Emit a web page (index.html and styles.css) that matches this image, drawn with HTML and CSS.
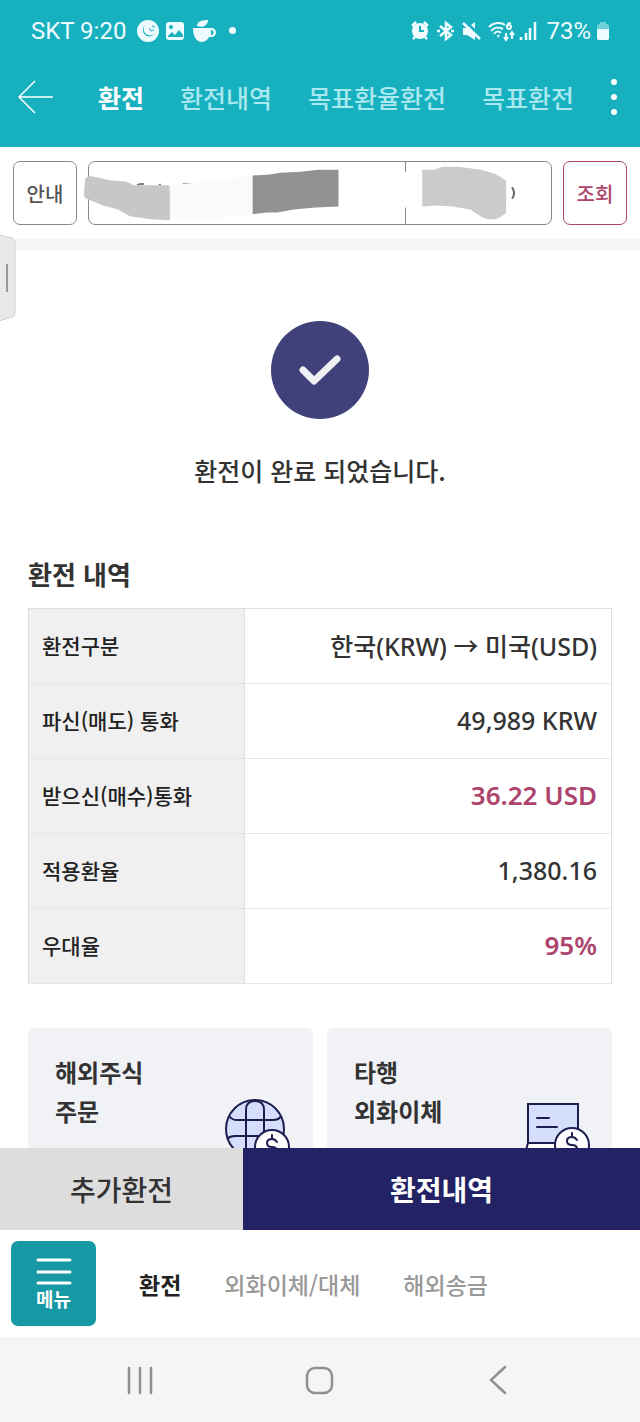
FILE: index.html
```html
<!DOCTYPE html>
<html lang="ko">
<head>
    <meta charset="UTF-8">
    <meta name="viewport" content="width=device-width, initial-scale=1.0">
    <title>환전</title>
    <link rel="stylesheet" href="styles.css">
</head>
<body>

    <header class="header">
        <div class="status">
            <span>SKT 9:20</span>
            <svg class="status-left" width="90" height="24" viewBox="0 0 90 24">
                <circle cx="12" cy="12" r="11" fill="#effcff"/>
                <path d="M9 6a6.500 6.500 0 1 0 10 8a6 6 0 0 1-10-8z" fill="#16b0bf"/>
                <path d="M13 9l2 3 3-1M16 7l3 1" stroke="#16b0bf" fill="none"/>
                <rect x="30" y="3" width="18" height="18" rx="3" fill="#effcff"/>
                <path d="M32 17l4-4 3 3 4-5 4 5v2H32z" fill="#16b0bf"/>
                <circle cx="35" cy="8" r="2" fill="#16b0bf"/>
                <path d="M57 9h18.500a4.500 4.500 0 0 1 0 9H73a9 9 0 0 1-7 5c-5 0-9-5-9-14zm18 2v5a2.500 2.500 0 0 0 0-5z" fill="#effcff" fill-rule="evenodd"/>
                <path d="M61 7c0-4 4-6 11-6 0 4-3 6-6 7z" fill="#effcff"/>
            </svg>
            <i class="status-dot"></i>
            <svg class="status-right" width="128" height="24" viewBox="0 0 128 24" fill="none" stroke="#effcff">
                <path d="M2 7l4-4M18 7l-4-4M5 18l-2 2M15 18l2 2" stroke-width="2.500"/>
                <circle cx="10" cy="12" r="8" fill="#effcff" stroke="none"/>
                <path d="M10 7v5h4" stroke="#16b0bf" stroke-width="2"/>
                <path d="M30 7l11 9-5 4V4l5 4-11 9" stroke-width="2.500"/>
                <path d="M27 12h3M41 12h3" stroke-width="2.500"/>
                <path d="M53 9h4l8-6v18l-8-5h-4z" fill="#effcff" stroke="none"/>
                <path d="M55 2l17 17" stroke="#16b0bf" stroke-width="3"/>
                <path d="M53 4l17 16" stroke-width="2.500"/>
                <path d="M79 8c5-5 12-5 16-2M81 12c3-4 8-4 12-2M84 15c2-3 5-3 7-1" stroke-width="2"/>
                <path d="M87 16l3 0-2 3z" fill="#effcff" stroke="none"/>
                <path d="M101 4c-3 0-4 2-4 4" stroke-width="2"/>
                <circle cx="99" cy="8" r="2" stroke-width="2"/>
                <path d="M96 14v7M94 18l2 3 2-3M102 20v-7M100 16l2-3 2 3" stroke-width="2"/>
                <path d="M111 18v3M116 14v7M120 9v12M125 3v18" stroke-width="2.500"/>
            </svg>
            <span>73%</span>
            <svg class="battery" width="12" height="20" viewBox="0 0 12 20">
                <path d="M3 1h6v2h1a2 2 0 0 1 2 2v12a2 2 0 0 1-2 2H2a2 2 0 0 1-2-2V5a2 2 0 0 1 2-2h1z" fill="#6fd0da"/>
                <path d="M0 8h12v9a2 2 0 0 1-2 2H2a2 2 0 0 1-2-2z" fill="#effcff"/>
            </svg>
        </div>
        <nav class="tabs">
            <button class="icon-btn back" aria-label="뒤로">
                <svg width="36" height="34" viewBox="0 0 36 34" fill="none" stroke="#fff" stroke-width="1.500">
                    <path d="M18 1L2 17l16 16M2 17h34"/>
                </svg>
            </button>
            <div class="tab-list">
                <a class="tab active" href="#">환전</a>
                <a class="tab" href="#">환전내역</a>
                <a class="tab" href="#">목표환율환전</a>
                <a class="tab" href="#">목표환전</a>
            </div>
            <button class="icon-btn" aria-label="더보기">
                <svg width="8" height="38" viewBox="0 0 8 38" fill="#fff">
                    <circle cx="4" cy="4" r="3"/>
                    <circle cx="4" cy="19" r="3"/>
                    <circle cx="4" cy="34" r="3"/>
                </svg>
            </button>
        </nav>
    </header>

    <main class="content">
        <section class="account">
            <button class="btn-box">안내</button>
            <button class="account-box" aria-label="계좌 선택">
                <span class="account-name"></span>
                <span class="account-type"></span>
                <svg class="mask" viewBox="0 0 463 64" preserveAspectRatio="none">
                    <path d="M308 10h18v37h-18z" fill="#fff"/>
                    <path d="M48 24q4-2 7-1M70 24l2-1M94 23h9" stroke="#777" stroke-width="2" fill="none"/>
                    <path d="M81 24l48-5 36-5v40l-37 4H81z" fill="#fafafa"/>
                    <path d="M-4 18q2-4 8-3l18 4 15 1 8 4h34q2 0 2 3v33l-19-1-21-3-12-7-15-4-16-7q-3-1-3-5z" fill="#c7c7c7"/>
                    <path d="M164 14l17-1 11-2 20-1 18-2 20 0v38l-23 1-22 2-16 3-11 0-14 2z" fill="#929292"/>
                    <path d="M334 8h12l8-3 16 0 23 3 14 4 11 7v34l-8 5q-8 3-16-1l-12-8-18-3-15-1-15 1z" fill="#cbcbcb"/>
                    <path d="M424 26q4 6 0 12" stroke="#666" stroke-width="2" fill="none"/>
                </svg>
            </button>
            <button class="btn-box search">조회</button>
        </section>

        <section class="result">
            <button class="handle" aria-label="패널 열기">
                <svg width="16" height="88" viewBox="0 0 16 88">
                    <path d="M-1 1l13 3q3 1 3 5v69q0 4-3 5l-13 4z" fill="#e9e9e9" stroke="#cfcfcf"/>
                    <path d="M7 30v28" stroke="#999" stroke-width="2"/>
                </svg>
            </button>
            <svg class="check" width="98" height="98" viewBox="0 0 98 98">
                <circle cx="49" cy="49" r="49" fill="#40417a"/>
                <path d="M32 49l11 11 23-22" fill="none" stroke="#efeff4" stroke-width="7" stroke-linecap="round" stroke-linejoin="round"/>
            </svg>
            <p class="message">환전이 완료 되었습니다.</p>
        </section>

        <section class="detail">
            <h2>환전 내역</h2>
            <table>
                <tbody>
                    <tr>
                        <th scope="row">환전구분</th>
                        <td>한국(KRW) → 미국(USD)</td>
                    </tr>
                    <tr>
                        <th scope="row">파신(매도) 통화</th>
                        <td>49,989 KRW</td>
                    </tr>
                    <tr>
                        <th scope="row">받으신(매수)통화</th>
                        <td class="point">36.22 USD</td>
                    </tr>
                    <tr>
                        <th scope="row">적용환율</th>
                        <td>1,380.16</td>
                    </tr>
                    <tr>
                        <th scope="row">우대율</th>
                        <td class="point">95%</td>
                    </tr>
                </tbody>
            </table>
        </section>

        <section class="cards">
            <a class="card" href="#">
                <span>해외주식<br>주문</span>
                <svg width="66" height="66" viewBox="0 0 66 66" fill="none" stroke="#1d1d50" stroke-width="2">
                    <circle cx="30" cy="30" r="29" fill="#d5dffb"/>
                    <path d="M21 59V11q0-9 9-9t9 9v48M4 17q3 4 8 4h36q6 0 8-4M2 40q3-3 8-3h40q5 0 8 3"/>
                    <circle cx="47" cy="48" r="17" fill="#fff"/>
                    <path d="M52 43q-2-3-5-3-5 0-5 4t5 4 5 4-5 4q-4 0-5-3M47 36v4M47 56v4" stroke-linecap="round"/>
                </svg>
            </a>
            <a class="card" href="#">
                <span>타행<br>외화이체</span>
                <svg width="66" height="66" viewBox="0 0 66 66" fill="none" stroke="#1d1d50" stroke-width="2">
                    <path d="M4 5h50v39H4z" fill="#d5dffb"/>
                    <path d="M4 44h50l5 14H0z" fill="#fff"/>
                    <path d="M13 19h12M13 28h20" stroke-linecap="round"/>
                    <circle cx="48" cy="46" r="17" fill="#fff"/>
                    <path d="M53 41q-2-3-5-3-5 0-5 4t5 4 5 4-5 4q-4 0-5-3M48 34v4M48 54v4" stroke-linecap="round"/>
                </svg>
            </a>
        </section>
    </main>

    <footer>
        <div class="actions">
            <button class="action-sub">추가환전</button>
            <button class="action-main">환전내역</button>
        </div>
        <nav class="menu-bar">
            <button class="menu-btn">
                <svg width="36" height="28" viewBox="0 0 36 28" stroke="#fff" stroke-width="3" stroke-linecap="round">
                    <path d="M2 3h32M2 15h32M2 26h32"/>
                </svg>
                메뉴
            </button>
            <a class="menu-link active" href="#">환전</a>
            <a class="menu-link" href="#">외화이체/대체</a>
            <a class="menu-link" href="#">해외송금</a>
        </nav>
        <div class="system-nav">
            <button class="icon-btn" aria-label="최근 앱">
                <svg width="30" height="30" viewBox="0 0 30 30" stroke="#909092" stroke-width="2.500" stroke-linecap="round">
                    <path d="M4 3v25M15 3v25M26 3v25"/>
                </svg>
            </button>
            <button class="icon-btn" aria-label="홈">
                <svg width="30" height="30" viewBox="0 0 30 30" fill="none" stroke="#909092" stroke-width="2.500">
                    <rect x="2" y="3" width="25" height="25" rx="8"/>
                </svg>
            </button>
            <button class="icon-btn" aria-label="뒤로">
                <svg width="30" height="30" viewBox="0 0 30 30" fill="none" stroke="#909092" stroke-width="2.500" stroke-linecap="round">
                    <path d="M20 2L6 15l14 13"/>
                </svg>
            </button>
        </div>
    </footer>

</body>
</html>
```
FILE: styles.css
```css
* {
    box-sizing: border-box;
}
body {
    margin: 0;
    height: 100vh;
    display: flex;
    flex-direction: column;
    background-color: #fff;
    color: #333;
    font-family: "Noto Sans CJK KR", sans-serif;
}
a {
    color: inherit;
    text-decoration: none;
}
button {
    margin: 0;
    padding: 0;
    border: none;
    background: none;
    color: inherit;
    font-family: inherit;
    cursor: pointer;
}
svg {
    display: block;
    flex-shrink: 0;
}

/* header */
.header {
    background-color: #16b0bf;
    color: #fff;
}
.status {
    display: flex;
    align-items: center;
    height: 61px;
    padding: 0 31px;
    color: #effcff;
    font-family: Roboto, sans-serif;
    font-size: 24px;
}
.status-left {
    margin-left: 10px;
    margin-right: 3px;
}
.status-dot {
    width: 7px;
    height: 7px;
    border-radius: 50%;
    background-color: #effcff;
}
.status-right {
    margin-left: auto;
    margin-right: 8px;
}
.battery {
    margin-left: 6px;
}
.tabs {
    display: flex;
    align-items: center;
    height: 86px;
    padding: 0 22px 14px 17px;
}
.tab-list {
    display: flex;
    flex: 1;
    gap: 36px;
    margin-left: 45px;
}
.tab {
    color: #a9e8ef;
    font-size: 25px;
    font-weight: 500;
    white-space: nowrap;
}
.tab.active {
    color: #fff;
    font-weight: 700;
}

/* content */
.content {
    flex: 1;
    min-height: 0;
    overflow-y: auto;
    scrollbar-width: none;
}
.account {
    display: flex;
    gap: 11px;
    padding: 14px 13px;
    border-bottom: 11px solid #f6f6f6;
}
.btn-box {
    width: 64px;
    height: 64px;
    border: 1px solid #888;
    border-radius: 7px;
    color: #555;
    font-size: 20px;
    font-weight: 500;
}
.btn-box.search {
    border-color: #ad446c;
    color: #ad446c;
}
.account-box {
    position: relative;
    display: flex;
    flex: 1;
    height: 64px;
    border: 1px solid #888;
    border-radius: 7px;
}
.account-name {
    flex: 317;
    height: 100%;
    border-right: 1px solid #888;
}
.account-type {
    flex: 146;
}
.mask {
    position: absolute;
    top: 0;
    left: 0;
    width: 100%;
    height: 100%;
    overflow: visible;
}
.result {
    position: relative;
    display: flex;
    flex-direction: column;
    align-items: center;
    padding-top: 71px;
}
.handle {
    position: absolute;
    top: -16px;
    left: 0;
}
.message {
    margin: 33px 0 0;
    font-size: 25px;
    font-weight: 500;
    line-height: 36px;
}
.detail {
    padding: 68px 28px 0;
}
h2 {
    margin: 0 0 16px;
    font-size: 26px;
    font-weight: 700;
    line-height: 36px;
}
table {
    width: 100%;
    border-collapse: collapse;
    border: 1px solid #ddd;
}
th, td {
    height: 75px;
    padding: 0 14px 2px 13px;
    border-bottom: 1px solid #e6e6e6;
}
th {
    width: 37%;
    border-right: 1px solid #ddd;
    background-color: #f0f0f0;
    color: #222;
    font-size: 21px;
    font-weight: 500;
    text-align: left;
}
td {
    font-family: "Noto Sans", "Noto Sans CJK KR", sans-serif;
    font-size: 25px;
    font-weight: 500;
    text-align: right;
}
td.point {
    color: #ad446c;
    font-size: 26px;
    font-weight: 600;
}
.cards {
    display: grid;
    grid-template-columns: 1fr 1fr;
    gap: 14px;
    padding: 44px 28px 28px;
}
.card {
    display: flex;
    justify-content: space-between;
    height: 156px;
    padding: 24px 22px 19px 27px;
    border-radius: 6px;
    background-color: #f1f2f6;
    font-size: 24px;
    font-weight: 700;
    line-height: 39px;
}
.card svg {
    align-self: flex-end;
}

/* footer */
.actions {
    display: flex;
    height: 82px;
}
.actions button {
    font-size: 28px;
}
.actions .action-sub {
    width: 38%;
    background-color: #ddd;
    font-weight: 500;
}
.actions .action-main {
    flex: 1;
    background-color: #222264;
    color: #fff;
    font-weight: 700;
}
.menu-bar {
    display: flex;
    align-items: center;
    gap: 43px;
    padding: 11px;
}
.menu-btn {
    display: flex;
    flex-direction: column;
    align-items: center;
    justify-content: center;
    gap: 2px;
    width: 85px;
    height: 85px;
    border-radius: 7px;
    background-color: #1698a5;
    color: #fff;
    font-size: 19px;
    font-weight: 700;
    line-height: 24px;
}
.menu-link {
    color: #999;
    font-size: 23px;
    font-weight: 500;
    white-space: nowrap;
}
.menu-link.active {
    color: #222;
    font-weight: 700;
}
.system-nav {
    display: flex;
    align-items: center;
    justify-content: space-around;
    height: 85px;
    padding: 0 50px;
    background-color: #f5f5f8;
}
```
